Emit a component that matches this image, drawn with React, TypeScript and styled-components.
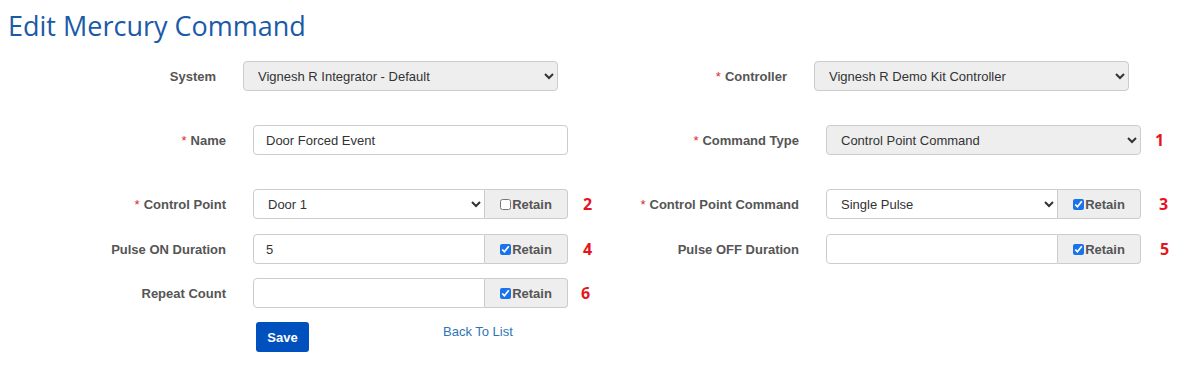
import React from "react";
import styled, { createGlobalStyle } from "styled-components";

const Global = createGlobalStyle`
  html, body { margin: 0; padding: 0; background: #fff; }
  body { font-family: "Liberation Sans", Arial, sans-serif; font-size: 13px; color: #333; }
  * { box-sizing: border-box; }
`;

const Page = styled.div`
  width: 1189px;
  padding: 11px 0 0 0;
`;

const Title = styled.h1`
  margin: 0 0 20px 8px;
  font-family: "Open Sans", "Noto Sans", sans-serif;
  font-weight: 400;
  font-size: 27px;
  line-height: 30px;
  color: #1b5aa7;
`;

const Form = styled.form`
  display: flex;
  flex-direction: column;
`;

const Row = styled.div<{ $gap: number }>`
  display: grid;
  grid-template-columns: 640px 1fr;
  margin-bottom: ${(p) => p.$gap}px;
`;

const Half = styled.div<{ $label: number }>`
  display: grid;
  grid-template-columns: ${(p) => p.$label + 27}px 315px auto;
  align-items: center;
  height: 30px;
`;

const Label = styled.label`
  padding-right: 27px;
  text-align: right;
  font-weight: 700;
  font-size: 13px;
  color: #555;
  white-space: nowrap;
`;

const Req = styled.span`
  color: #e0262b;
  font-weight: 400;
  margin-right: 4px;
`;

const controlBase = `
  height: 30px;
  border: 1px solid #ccc;
  font-family: "Liberation Sans", Arial, sans-serif;
  font-size: 13px;
  color: #333;
  outline: none;
`;

const Select = styled.select<{ $grey?: boolean; $joined?: boolean }>`
  ${controlBase}
  width: 100%;
  padding: 0 8px 0 10px;
  background: ${(p) => (p.$grey ? "#eeeeee" : "#ffffff")};
  border-radius: ${(p) => (p.$joined ? "4px 0 0 4px" : "4px")};
`;

const TextInput = styled.input<{ $joined?: boolean }>`
  ${controlBase}
  width: 100%;
  padding: 0 12px;
  background: #fff;
  border-radius: ${(p) => (p.$joined ? "4px 0 0 4px" : "4px")};
`;

const Group = styled.div`
  display: flex;
  width: 315px;
  height: 30px;
`;

const GroupMain = styled.div`
  flex: 1;
  display: flex;
`;

const Addon = styled.label`
  width: 83px;
  flex: none;
  height: 30px;
  display: flex;
  align-items: center;
  justify-content: center;
  background: #eee;
  border: 1px solid #ccc;
  border-left: none;
  border-radius: 0 4px 4px 0;
  font-weight: 700;
  font-size: 13px;
  color: #555;
`;

const Check = styled.input`
  width: 11px;
  height: 11px;
  margin: 1px 1px 0 0;
  accent-color: #1a73e8;
`;

const Marker = styled.span<{ $pad: number }>`
  padding-left: ${(p) => p.$pad}px;
  font-family: "Open Sans", "Noto Sans", sans-serif;
  font-weight: 700;
  font-size: 16px;
  color: #e8141c;
`;

const Actions = styled.div`
  display: flex;
  align-items: flex-start;
  margin-left: 256px;
  gap: 134px;
`;

const SaveButton = styled.button`
  width: 53px;
  height: 30px;
  border: none;
  border-radius: 3px;
  background: #0050bd;
  color: #fff;
  font-family: "Liberation Sans", Arial, sans-serif;
  font-weight: 700;
  font-size: 13px;
  cursor: pointer;
`;

const BackLink = styled.a`
  margin-top: 2px;
  color: #2f75b5;
  font-size: 13px;
  text-decoration: none;
`;

function Retain({ checked }: { checked: boolean }) {
  return (
    <Addon>
      <Check type="checkbox" defaultChecked={checked} />
      Retain
    </Addon>
  );
}

export default function App() {
  return (
    <Page>
      <Global />
      <Title>Edit Mercury Command</Title>
      <Form onSubmit={(e) => e.preventDefault()}>
        <Row $gap={34}>
          <Half $label={216}>
            <Label>System</Label>
            <Select $grey defaultValue="a">
              <option value="a">Vignesh R Integrator - Default</option>
            </Select>
            <span />
          </Half>
          <Half $label={147}>
            <Label>
              <Req>*</Req>Controller
            </Label>
            <Select $grey defaultValue="a">
              <option value="a">Vignesh R Demo Kit Controller</option>
            </Select>
            <span />
          </Half>
        </Row>

        <Row $gap={34}>
          <Half $label={226}>
            <Label>
              <Req>*</Req>Name
            </Label>
            <TextInput defaultValue="Door Forced Event" />
            <span />
          </Half>
          <Half $label={159}>
            <Label>
              <Req>*</Req>Command Type
            </Label>
            <Select $grey defaultValue="a">
              <option value="a">Control Point Command</option>
            </Select>
            <Marker $pad={14}>1</Marker>
          </Half>
        </Row>

        <Row $gap={15}>
          <Half $label={226}>
            <Label>
              <Req>*</Req>Control Point
            </Label>
            <Group>
              <GroupMain>
                <Select $joined defaultValue="a">
                  <option value="a">Door 1</option>
                </Select>
              </GroupMain>
              <Retain checked={false} />
            </Group>
            <Marker $pad={15}>2</Marker>
          </Half>
          <Half $label={159}>
            <Label>
              <Req>*</Req>Control Point Command
            </Label>
            <Group>
              <GroupMain>
                <Select $joined defaultValue="a">
                  <option value="a">Single Pulse</option>
                </Select>
              </GroupMain>
              <Retain checked />
            </Group>
            <Marker $pad={18}>3</Marker>
          </Half>
        </Row>

        <Row $gap={14}>
          <Half $label={226}>
            <Label>Pulse ON Duration</Label>
            <Group>
              <GroupMain>
                <TextInput $joined defaultValue="5" />
              </GroupMain>
              <Retain checked />
            </Group>
            <Marker $pad={15}>4</Marker>
          </Half>
          <Half $label={159}>
            <Label>Pulse OFF Duration</Label>
            <Group>
              <GroupMain>
                <TextInput $joined defaultValue="" />
              </GroupMain>
              <Retain checked />
            </Group>
            <Marker $pad={19}>5</Marker>
          </Half>
        </Row>

        <Row $gap={14}>
          <Half $label={226}>
            <Label>Repeat Count</Label>
            <Group>
              <GroupMain>
                <TextInput $joined defaultValue="" />
              </GroupMain>
              <Retain checked />
            </Group>
            <Marker $pad={13}>6</Marker>
          </Half>
          <span />
        </Row>

        <Actions>
          <SaveButton type="submit">Save</SaveButton>
          <BackLink href="#">Back To List</BackLink>
        </Actions>
      </Form>
    </Page>
  );
}
